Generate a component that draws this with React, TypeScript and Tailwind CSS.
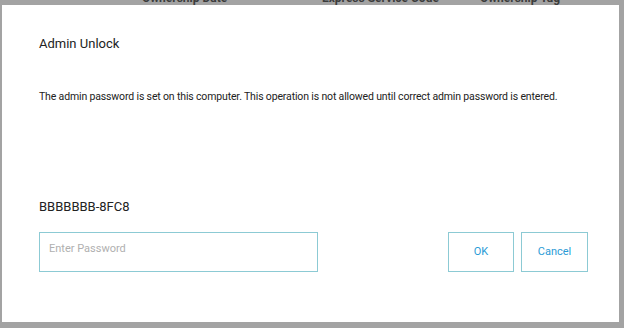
import React from "react";

export default function App() {
  return (
    <div className="w-[624px] h-[328px] bg-[#a3a3a3] overflow-hidden" style={{ fontFamily: "Roboto, 'Liberation Sans', sans-serif" }}>
      <div className="h-[5px] overflow-hidden relative">
        <div className="flex text-[12px] font-bold text-[#3c3c3c] -mt-[9px] leading-[14px]">
          <span className="ml-[142px] w-[180px]">Ownership Date</span>
          <span className="w-[158px]">Express Service Code</span>
          <span>Ownership Tag</span>
        </div>
      </div>
      <div className="ml-[2px] w-[617px] h-[317px] bg-white flex flex-col pl-[37px] pr-[31px]">
        <h1 className="mt-[29px] text-[13px] leading-[20px] text-[#222]">Admin Unlock</h1>
        <p className="mt-[36px] text-[10.5px] tracking-[-0.15px] leading-[14px] text-[#222] whitespace-nowrap">
          The admin password is set on this computer. This operation is not allowed until correct admin password is entered.
        </p>
        <div className="mt-[94px] text-[13px] leading-[18px] text-[#222]">BBBBBBB-8FC8</div>
        <div className="mt-[16px] flex items-start">
          <div className="w-[279px] h-[40px] border border-[#8ccad4] pl-[9px] pt-[8px] text-[11px] text-[#b0b0b0]">
            Enter Password
          </div>
          <div className="ml-auto flex gap-[7px]">
            <button className="w-[66px] h-[40px] border border-[#8ccad4] text-[11px] text-[#2b9bd6] bg-white">OK</button>
            <button className="w-[67px] h-[40px] border border-[#8ccad4] text-[11px] text-[#2b9bd6] bg-white">Cancel</button>
          </div>
        </div>
      </div>
    </div>
  );
}
